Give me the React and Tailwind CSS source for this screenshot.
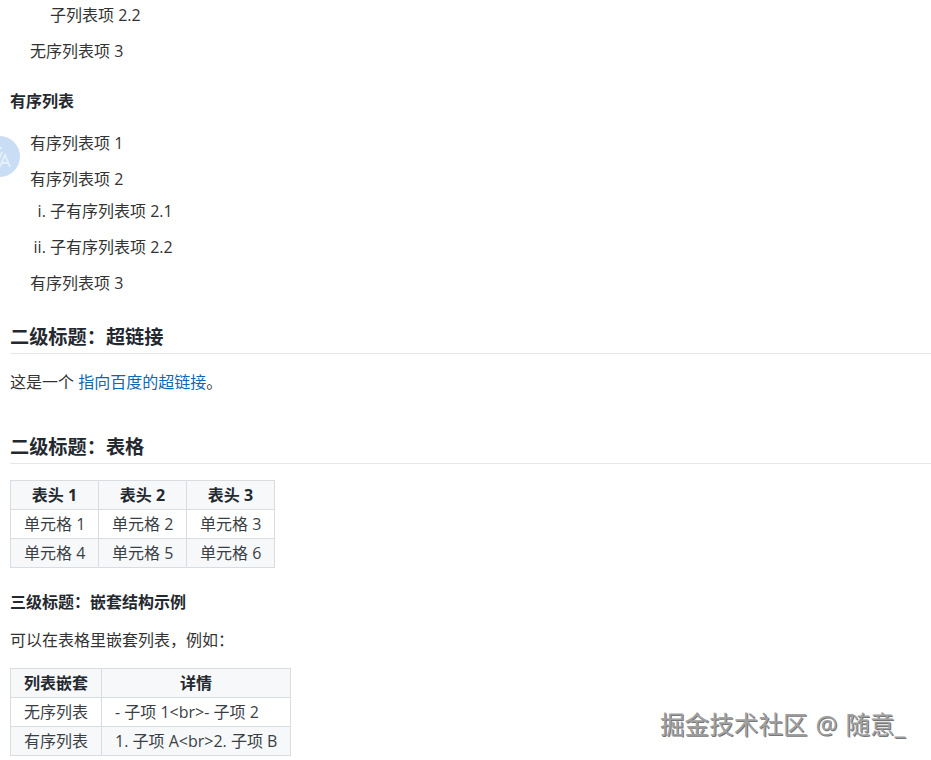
const FONT = "font-['Open_Sans','Noto_Sans_CJK_SC',sans-serif]"

const table1 = [
  ['表头 1', '表头 2', '表头 3'],
  ['单元格 1', '单元格 2', '单元格 3'],
  ['单元格 4', '单元格 5', '单元格 6'],
]

const table2 = [
  ['列表嵌套', '详情'],
  ['无序列表', '- 子项 1<br>- 子项 2'],
  ['有序列表', '1. 子项 A<br>2. 子项 B'],
]

function DocTable({ rows, widths, className }) {
  return (
    <table className={`border-collapse table-fixed text-[16px] leading-[28px] ${className}`}>
      <colgroup>
        {widths.map((w, i) => (
          <col key={i} className={w} />
        ))}
      </colgroup>
      <tbody>
        {rows.map((row, r) => (
          <tr key={r} className={r % 2 === 0 ? 'bg-[#f6f8fa]' : 'bg-white'}>
            {row.map((cell, c) =>
              r === 0 ? (
                <th key={c} className="border border-[#d9dce0] p-0 text-center font-bold text-[#24292f]">{cell}</th>
              ) : (
                <td key={c} className="border border-[#d9dce0] py-0 pl-[13px] pr-0 text-left font-normal text-[#3a3f45] whitespace-nowrap">{cell}</td>
              )
            )}
          </tr>
        ))}
      </tbody>
    </table>
  )
}

function H2({ children, className }) {
  return (
    <h2 className={`border-b border-[#e4e6e9] h-[33px] leading-[32px] text-[19.2px] font-bold text-[#24292f] ${className}`}>
      {children}
    </h2>
  )
}

export default function App() {
  return (
    <div className={`relative h-[760px] w-[931px] overflow-hidden bg-white ${FONT} text-[16px] leading-[24px] text-[#333]`}>
      <div className="pl-[10px] pt-[3px]">
        <ul className="list-none pl-5">
          <li>
            <ul className="list-none pl-5">
              <li className="mb-3">子列表项 2.2</li>
            </ul>
          </li>
          <li className="mb-3">无序列表项 3</li>
        </ul>

        <h4 className="mt-[26px] font-bold text-[#24292f]">有序列表</h4>

        <ol className="mt-[18px] list-none pl-5">
          <li className="mb-3">有序列表项 1</li>
          <li className="mb-3">
            有序列表项 2
            <ol className="mt-2 list-[lower-roman] pl-5">
              <li className="mb-3">子有序列表项 2.1</li>
              <li>子有序列表项 2.2</li>
            </ol>
          </li>
          <li>有序列表项 3</li>
        </ol>

        <H2 className="mt-[26px]">二级标题：超链接</H2>
        <p className="mt-4">
          这是一个 <a className="text-[#0969b8]">指向百度的超链接</a>。
        </p>

        <H2 className="mt-[37px]">二级标题：表格</H2>
        <DocTable rows={table1} widths={['w-[88px]', 'w-[88px]', 'w-[88px]']} className="mt-4 w-[264px]" />

        <h3 className="mt-[22px] font-bold text-[#24292f]">三级标题：嵌套结构示例</h3>
        <p className="mt-[14px]">可以在表格里嵌套列表，例如：</p>
        <DocTable rows={table2} widths={['w-[91px]', 'w-[189px]']} className="mt-4 w-[280px]" />
      </div>

      {/* floating translate button, mostly off the left edge */}
      <div className="absolute left-[-21px] top-[136px] h-[41px] w-[41px] rounded-full bg-[#c9def4]">
        <svg viewBox="0 0 41 41" className="h-full w-full" fill="none" stroke="#e6f0fa" strokeWidth="1.8">
          <path d="M15 12h8M23 16c-1 3-2 5-3 6M18 17c1 2 2 3 4 4" />
          <path d="M21 31l5-12 5 12M22.5 27h7" />
        </svg>
      </div>

      <div className="absolute left-[660px] top-[708px] text-[24.6px] leading-[34px] [word-spacing:1.5px] text-[#a0a0a0] whitespace-nowrap [text-shadow:1px_1px_0_#777,-1px_-1px_0_#fff]">
        掘金技术社区 @ 随意_
      </div>
    </div>
  )
}
